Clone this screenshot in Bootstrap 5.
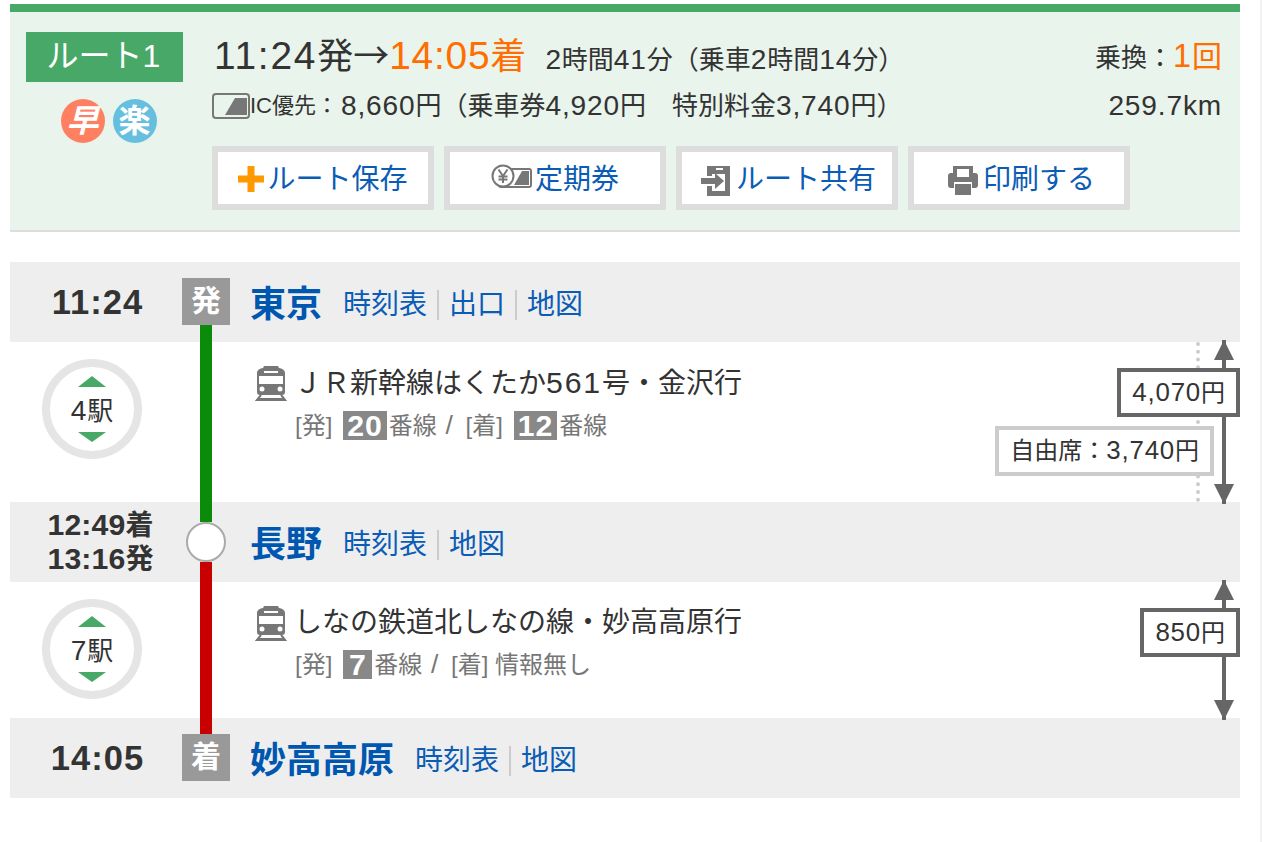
<!DOCTYPE html>
<html lang="ja">
<head>
<meta charset="utf-8">
<title>ルート1</title>
<link href="https://cdn.jsdelivr.net/npm/bootstrap@5.3.0/dist/css/bootstrap.min.css" rel="stylesheet">
<style>
html,body{background:#fff;overflow:hidden}
body{font-family:"Liberation Sans","Noto Sans CJK JP",sans-serif;color:#333;line-height:1.3;white-space:nowrap}
a{color:#0b5cb5;text-decoration:none}
.num{font-size:1.08em;letter-spacing:.03em}
.cjk{font-family:"Noto Sans CJK JP",sans-serif}
.page{width:1262px;height:842px;padding:4px 20px 0 10px;border-right:2px solid #f3f3f3}
.summary{height:228px;background:#e9f4ec;border-top:8px solid #48a868;border-bottom:2px solid #ddd;padding:20px 18px 0 16px}
.left-side{width:157px}
.route-tag{height:50px;background:#48a868;color:#fff;font-size:32px;line-height:48px;padding-right:2px}
.speed-dots{margin-top:17px;gap:8px;padding-left:8px}
.dot-mark{width:44px;height:44px;border-radius:50%;color:#fff;font-weight:700;font-size:32px;line-height:44px;text-align:center}
.dot-fast{background:#ff8060;font-style:italic}
.dot-easy{background:#66bfdf}
.main-side{margin-left:31px;width:1008px}
.line-one{height:46px;margin-top:1px}
.time-line{margin-top:-3px}
.big-time{font-size:36px;line-height:46px}
.big-time .num{letter-spacing:.045em}
.big-time .arrive .num{letter-spacing:.02em}
.arrive{color:#ff6e00}
.trip-length{font-size:26px;margin-left:19px;line-height:46px}
.change-count{font-size:26px;line-height:46px}
.change-count b{font-weight:400;color:#ff6e00;font-size:30px}
.line-two{margin-top:10px;height:34px;align-items:center;margin-left:-2px}
.ic-small{font-size:22px}
.fare-text{font-size:26px;margin-left:3px}
.km-text{font-size:26px}
.button-row{margin-top:23px;gap:10px;margin-left:-2px}
.route-btn{width:222px;height:64px;background:#fff;border:6px solid #ddd;border-radius:0;font-size:28px;line-height:1.3;color:#0b5cb5;padding:5px 0 0;display:flex;align-items:center;justify-content:center;gap:3px}
.route-btn:hover{background:#fff;color:#0b5cb5;border-color:#ddd}
.route-btn.wide-gap{gap:6px;padding-left:3px}
.route-btn.print-gap{gap:5px;padding-left:5px}
.icon-plus{margin-bottom:4px}
.icon-pass{margin-bottom:10px}
.plan{margin-top:30px}
.station-row{height:80px;background:#eee}
.time-cell{width:172px;text-align:center;font-weight:700;color:#333;font-size:32px;line-height:1.05;padding-left:3px}
.time-cell .num{letter-spacing:.03em}
.time-double{font-size:28px;line-height:33px;padding-left:9px}
.time-double .num{letter-spacing:.005em}
.rail-cell{width:48px;flex:none;height:100%}
.pad-top-flag{padding-top:16px}
.pad-bottom-flag{padding-bottom:17px}
.flag-box{width:48px;height:47px;background:#999;color:#fff;font-weight:700;font-size:30px;line-height:46px;text-align:center}
.rail{width:12px;flex:1 1 auto}
.rail-green{background:#0a8c0a}
.rail-red{background:#c80000}
.stop-ring{width:40px;height:40px;border:2px solid #aaa;border-radius:50%;background:#fff;flex:none}
.name-cell{margin-left:20px;padding-top:5px}
.station-name{font-size:36px;font-weight:700;color:#0057b0;margin-right:21px;line-height:46px}
.station-link{font-size:28px;padding:0 10px;border-left:2px solid #ccc;line-height:30px}
.station-link:first-of-type{border-left:0;padding-left:0}
.leg{background:#fff}
.leg-a{height:160px}
.leg-b{height:136px}
.count-cell{width:172px;padding:17px 0 0 32px;flex:none}
.count-ring{width:100px;height:100px;border:8px solid #e5e5e5;border-radius:50%;font-size:26px;line-height:26px}
.tri-up{width:0;height:0;border-left:14px solid transparent;border-right:14px solid transparent;border-bottom:11px solid #48a868;margin-bottom:11px}
.tri-down{width:0;height:0;border-left:14px solid transparent;border-right:14px solid transparent;border-top:10px solid #48a868;margin-top:8px}
.leg-rail{width:48px;flex:none}
.leg-body{margin-left:25px;padding-top:21px;flex:1 1 auto}
.line-name{font-size:28px;line-height:40px;color:#333;gap:7px}
.line-name .num{letter-spacing:.06em}
.track-info{font-size:24px;color:#777;margin:7px 0 0 40px;line-height:30px}
.track-num{display:inline-block;min-width:29px;text-align:center;background:#888;color:#fff;font-weight:700;font-size:28px;line-height:29px;height:29px;padding:0 4px;margin:0 2px 0 11px;vertical-align:top}
.track-gap{margin:0 6px 0 2px;font-size:1.1em;line-height:1}
.fare-cell{position:relative;width:244px;flex:none;padding-top:26px}
.fare-main{background:#fff;border:4px solid #666;height:49px;font-size:24px;line-height:40px;padding:0 11px;position:relative;z-index:2}
.fare-sub{background:#fff;border:4px solid #ccc;height:50px;font-size:24px;line-height:41px;padding:0 11px;margin:9px 26px 0 0;position:relative;z-index:2}
.dots-line{position:absolute;right:40px;top:0;bottom:0;border-left:4px dotted #ccc}
.arrow-line{position:absolute;right:14px;top:-2px;bottom:-2px;width:4px;background:#666;z-index:1}
.arrow-line::before,.arrow-line::after{content:"";position:absolute;left:-8px;border-left:10px solid transparent;border-right:10px solid transparent}
.arrow-line::before{top:0;border-bottom:20px solid #666}
.arrow-line::after{bottom:0;border-top:20px solid #666}
</style>
</head>
<body>
<div class="page">
  <section class="summary d-flex">
    <div class="left-side flex-shrink-0">
      <div class="route-tag text-center">ルート1</div>
      <div class="speed-dots d-flex justify-content-center">
        <span class="dot-mark dot-fast">早</span>
        <span class="dot-mark dot-easy">楽</span>
      </div>
    </div>
    <div class="main-side">
      <div class="line-one d-flex justify-content-between">
        <div class="time-line"><span class="big-time"><span class="num">11:24</span>発<span class="cjk">→</span><span class="arrive"><span class="num">14:05</span>着</span></span><span class="trip-length"><span class="num">2</span>時間<span class="num">41</span>分（乗車<span class="num">2</span>時間<span class="num">14</span>分）</span></div>
        <div class="change-count">乗換：<b><span class="num">1</span>回</b></div>
      </div>
      <div class="line-two d-flex justify-content-between">
        <div class="d-flex align-items-center">
          <svg width="38" height="26" viewBox="0 0 38 26"><rect x="1" y="1" width="36" height="24" rx="3" fill="none" stroke="#777" stroke-width="2"/><path d="M13 22 23 5h12v17z" fill="#777"/></svg>
          <span class="ic-small">IC優先：</span><span class="fare-text"><span class="num">8,660</span>円（乗車券<span class="num">4,920</span>円　特別料金<span class="num">3,740</span>円）</span>
        </div>
        <div class="km-text"><span class="num">259.7km</span></div>
      </div>
      <div class="button-row d-flex">
        <a class="btn route-btn" href="#"><svg class="icon-plus" width="26" height="26" viewBox="0 0 26 26"><path d="M9.500 0h7v9.500H26v7h-9.500V26h-7v-9.500H0v-7h9.500z" fill="#f90"/></svg>ルート保存</a>
        <a class="btn route-btn" href="#"><svg class="icon-pass" width="41" height="24" viewBox="0 0 41 24"><rect x="8" y="5" width="32" height="18" rx="2" fill="#fff" stroke="#777" stroke-width="2"/><path d="M23 21 31 7h7v14z" fill="#777"/><circle cx="12" cy="12" r="10.500" fill="#fff" stroke="#777" stroke-width="2"/><path d="M7.500 5.500 12 12l4.500-6.500M12 12v7M7.500 12.500h9M7.500 15.500h9" fill="none" stroke="#777" stroke-width="2"/></svg>定期券</a>
        <a class="btn route-btn wide-gap" href="#"><svg width="29" height="30" viewBox="0 0 29 30"><path fill-rule="evenodd" d="M6 0h23v30H6V20h5v5h13V8H11v2H6zM15 2v2h7V2z" fill="#777"/><path d="M0 12h14V7l9 8-9 8v-5H0z" fill="#777"/></svg>ルート共有</a>
        <a class="btn route-btn print-gap" href="#"><svg width="30" height="29" viewBox="0 0 30 29"><path fill-rule="evenodd" d="M5 0h20v7h2a3 3 0 0 1 3 3v9a3 3 0 0 1-3 3h-3v-6H6v6H3a3 3 0 0 1-3-3v-9a3 3 0 0 1 3-3h2zM9 3v8h12V3z" fill="#777"/><rect x="7" y="18" width="16" height="11" fill="#777"/></svg>印刷する</a>
      </div>
    </div>
  </section>

  <section class="plan">
    <div class="station-row d-flex align-items-center">
      <div class="time-cell"><span class="num">11:24</span></div>
      <div class="rail-cell d-flex flex-column align-items-center pad-top-flag"><div class="flag-box flex-shrink-0">発</div><div class="rail rail-green"></div></div>
      <div class="name-cell d-flex align-items-center"><span class="station-name">東京</span><a class="station-link" href="#">時刻表</a><a class="station-link" href="#">出口</a><a class="station-link" href="#">地図</a></div>
    </div>

    <div class="leg leg-a d-flex">
      <div class="count-cell"><div class="count-ring d-flex flex-column align-items-center justify-content-center"><span class="tri-up"></span><span><span class="num">4</span>駅</span><span class="tri-down"></span></div></div>
      <div class="leg-rail d-flex justify-content-center"><div class="rail rail-green flex-grow-0"></div></div>
      <div class="leg-body">
        <div class="line-name d-flex align-items-center">
          <svg width="32" height="35" viewBox="0 0 32 35"><path d="M9 0h14l1 2c3 .5 6 2 6 5v19c0 2-1 3-3 3H5c-2 0-3-1-3-3V7c0-3 3-4.500 6-5z" fill="#777"/><rect x="4" y="10" width="24" height="8" fill="#fff"/><rect x="9" y="5" width="14" height="2" fill="#fff"/><circle cx="7" cy="23" r="2.500" fill="#fff"/><circle cx="25" cy="23" r="2.500" fill="#fff"/><path d="M6 29 1 35h30l-5-6M3 33h26" fill="none" stroke="#777" stroke-width="2"/></svg>
          <span>ＪＲ新幹線はくたか<span class="num">561</span>号・金沢行</span>
        </div>
        <div class="track-info">[発]<span class="track-num"><span class="num">20</span></span>番線 <span class="track-gap">/</span> [着]<span class="track-num"><span class="num">12</span></span>番線</div>
      </div>
      <div class="fare-cell d-flex flex-column align-items-end">
        <div class="dots-line"></div><div class="arrow-line"></div>
        <div class="fare-main"><span class="num">4,070</span>円</div>
        <div class="fare-sub">自由席：<span class="num">3,740</span>円</div>
      </div>
    </div>

    <div class="station-row d-flex align-items-center">
      <div class="time-cell time-double"><span class="num">12:49</span>着<br><span class="num">13:16</span>発</div>
      <div class="rail-cell d-flex flex-column align-items-center"><div class="rail rail-green"></div><div class="stop-ring"></div><div class="rail rail-red"></div></div>
      <div class="name-cell d-flex align-items-center"><span class="station-name">長野</span><a class="station-link" href="#">時刻表</a><a class="station-link" href="#">地図</a></div>
    </div>

    <div class="leg leg-b d-flex">
      <div class="count-cell"><div class="count-ring d-flex flex-column align-items-center justify-content-center"><span class="tri-up"></span><span><span class="num">7</span>駅</span><span class="tri-down"></span></div></div>
      <div class="leg-rail d-flex justify-content-center"><div class="rail rail-red flex-grow-0"></div></div>
      <div class="leg-body">
        <div class="line-name d-flex align-items-center">
          <svg width="32" height="35" viewBox="0 0 32 35"><path d="M9 0h14l1 2c3 .5 6 2 6 5v19c0 2-1 3-3 3H5c-2 0-3-1-3-3V7c0-3 3-4.500 6-5z" fill="#777"/><rect x="4" y="10" width="24" height="8" fill="#fff"/><rect x="9" y="5" width="14" height="2" fill="#fff"/><circle cx="7" cy="23" r="2.500" fill="#fff"/><circle cx="25" cy="23" r="2.500" fill="#fff"/><path d="M6 29 1 35h30l-5-6M3 33h26" fill="none" stroke="#777" stroke-width="2"/></svg>
          <span>しなの鉄道北しなの線・妙高高原行</span>
        </div>
        <div class="track-info">[発]<span class="track-num"><span class="num">7</span></span>番線 <span class="track-gap">/</span> [着] 情報無し</div>
      </div>
      <div class="fare-cell d-flex flex-column align-items-end">
        <div class="arrow-line"></div>
        <div class="fare-main"><span class="num">850</span>円</div>
      </div>
    </div>

    <div class="station-row d-flex align-items-center">
      <div class="time-cell"><span class="num">14:05</span></div>
      <div class="rail-cell d-flex flex-column align-items-center pad-bottom-flag"><div class="rail rail-red"></div><div class="flag-box flex-shrink-0">着</div></div>
      <div class="name-cell d-flex align-items-center"><span class="station-name">妙高高原</span><a class="station-link" href="#">時刻表</a><a class="station-link" href="#">地図</a></div>
    </div>
  </section>
</div>
<script src="https://cdn.jsdelivr.net/npm/bootstrap@5.3.0/dist/js/bootstrap.bundle.min.js"></script>
</body>
</html>
